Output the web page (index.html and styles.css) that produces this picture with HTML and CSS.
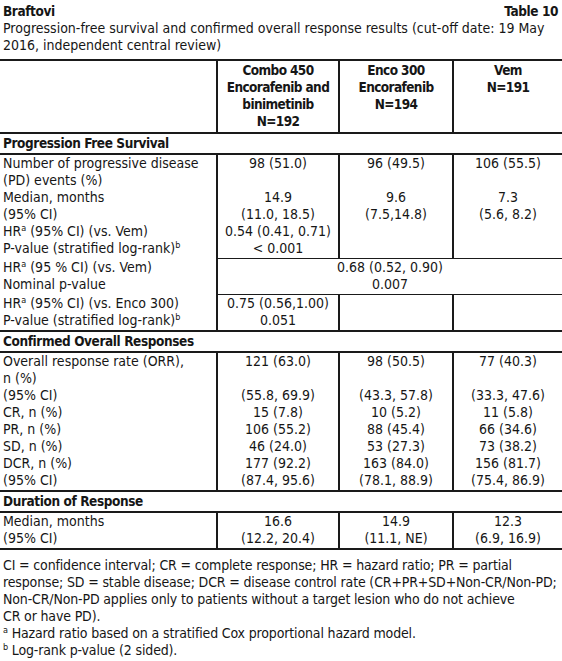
FILE: index.html
```html
<!DOCTYPE html>
<html>
<head>
<meta charset="utf-8">
<link rel="stylesheet" href="styles.css">
</head>
<body>
<div class="page">
  <div class="titlebar"><span>Braftovi</span><span>Table 10</span></div>
  <div class="caption">Progression-free survival and confirmed overall response results (cut-off date: 19 May<br>2016, independent central review)</div>
  <table class="results">
    <colgroup>
      <col class="c-label"><col class="c-combo"><col class="c-enco"><col class="c-vem">
    </colgroup>
    <tr class="head">
      <td></td>
      <td>Combo 450<br>Encorafenib and<br>binimetinib<br>N=192</td>
      <td>Enco 300<br>Encorafenib<br>N=194</td>
      <td>Vem<br>N=191</td>
    </tr>
    <tr class="sec"><td colspan="4">Progression Free Survival</td></tr>
    <tr>
      <td class="label">Number of progressive disease<br>(PD) events (%)<br>Median, months<br>(95% CI)<br>HR<sup>a</sup> (95% CI) (vs. Vem)<br>P-value (stratified log-rank)<sup>b</sup></td>
      <td class="num">98 (51.0)<br>&nbsp;<br>14.9<br>(11.0, 18.5)<br>0.54 (0.41, 0.71)<br>&lt; 0.001</td>
      <td class="num">96 (49.5)<br>&nbsp;<br>9.6<br>(7.5,14.8)<br>&nbsp;<br>&nbsp;</td>
      <td class="num">106 (55.5)<br>&nbsp;<br>7.3<br>(5.6, 8.2)<br>&nbsp;<br>&nbsp;</td>
    </tr>
    <tr class="thin">
      <td class="label">HR<sup>a</sup> (95 % CI) (vs. Vem)<br>Nominal p-value</td>
      <td class="num" colspan="3">0.68 (0.52, 0.90)<br>0.007</td>
    </tr>
    <tr class="thin">
      <td class="label">HR<sup>a</sup> (95% CI) (vs. Enco 300)<br>P-value (stratified log-rank)<sup>b</sup></td>
      <td class="num">0.75 (0.56,1.00)<br>0.051</td>
      <td class="num"></td>
      <td class="num"></td>
    </tr>
    <tr class="sec"><td colspan="4">Confirmed Overall Responses</td></tr>
    <tr>
      <td class="label">Overall response rate (ORR),<br>n (%)<br>(95% CI)<br>CR, n (%)<br>PR, n (%)<br>SD, n (%)<br>DCR, n (%)<br>(95% CI)</td>
      <td class="num">121 (63.0)<br>&nbsp;<br>(55.8, 69.9)<br>15 (7.8)<br>106 (55.2)<br>46 (24.0)<br>177 (92.2)<br>(87.4, 95.6)</td>
      <td class="num">98 (50.5)<br>&nbsp;<br>(43.3, 57.8)<br>10 (5.2)<br>88 (45.4)<br>53 (27.3)<br>163 (84.0)<br>(78.1, 88.9)</td>
      <td class="num">77 (40.3)<br>&nbsp;<br>(33.3, 47.6)<br>11 (5.8)<br>66 (34.6)<br>73 (38.2)<br>156 (81.7)<br>(75.4, 86.9)</td>
    </tr>
    <tr class="sec"><td colspan="4">Duration of Response</td></tr>
    <tr>
      <td class="label">Median, months<br>(95% CI)</td>
      <td class="num">16.6<br>(12.2, 20.4)</td>
      <td class="num">14.9<br>(11.1, NE)</td>
      <td class="num">12.3<br>(6.9, 16.9)</td>
    </tr>
  </table>
  <div class="notes">
    <p>CI = confidence interval; CR = complete response; HR = hazard ratio; PR = partial<br>response; SD = stable disease; DCR = disease control rate (CR+PR+SD+Non-CR/Non-PD;<br>Non-CR/Non-PD applies only to patients without a target lesion who do not achieve<br>CR or have PD).</p>
    <p><sup>a</sup> Hazard ratio based on a stratified Cox proportional hazard model.</p>
    <p><sup>b</sup> Log-rank p-value (2 sided).</p>
  </div>
</div>
</body>
</html>
```

FILE: styles.css
```css
html, body {
  margin: 0;
  padding: 0;
  background: #ffffff;
}

body {
  color: #161616;
  font-family: "DejaVu Sans Condensed", "Liberation Sans", sans-serif;
  font-size: 14px;
  line-height: 17px;
}

.page {
  width: 562px;
}

.titlebar {
  display: flex;
  justify-content: space-between;
  font-weight: bold;
  font-size: 13.5px;
  letter-spacing: -0.4px;
  padding: 3px 4px 0 3px;
}

.caption {
  padding: 0 3px;
  white-space: nowrap;
}

.results {
  width: 562px;
  table-layout: fixed;
  border-collapse: collapse;
  margin-top: 5px;
}

.c-label { width: 217px; }
.c-combo { width: 122px; }
.c-enco { width: 114px; }
.c-vem { width: 109px; }

.results td {
  padding: 0 3px 1px;
  vertical-align: top;
  white-space: nowrap;
  border-top: 2px solid #1a1a1a;
}

.results td + td {
  border-left: 2px solid #1a1a1a;
}

.results .head td {
  font-weight: bold;
  font-size: 13.5px;
  letter-spacing: -0.6px;
  text-align: center;
  padding: 1px 1px 2px;
}

.results .sec td {
  font-weight: bold;
  font-size: 13.5px;
  letter-spacing: -0.4px;
  padding: 1px 3px;
}

.results tr.thin td.num {
  border-top: 1px solid #1a1a1a;
}

.results tr.thin td.label {
  border-top: 0;
}

.results tr:last-child td {
  border-bottom: 2px solid #1a1a1a;
}

.num {
  text-align: center;
}

sup {
  font-size: 9px;
  line-height: 0;
  vertical-align: 5px;
}

.notes {
  padding: 7px 3px 0;
  white-space: nowrap;
  letter-spacing: -0.15px;
}

.notes p {
  margin: 0;
}
```
